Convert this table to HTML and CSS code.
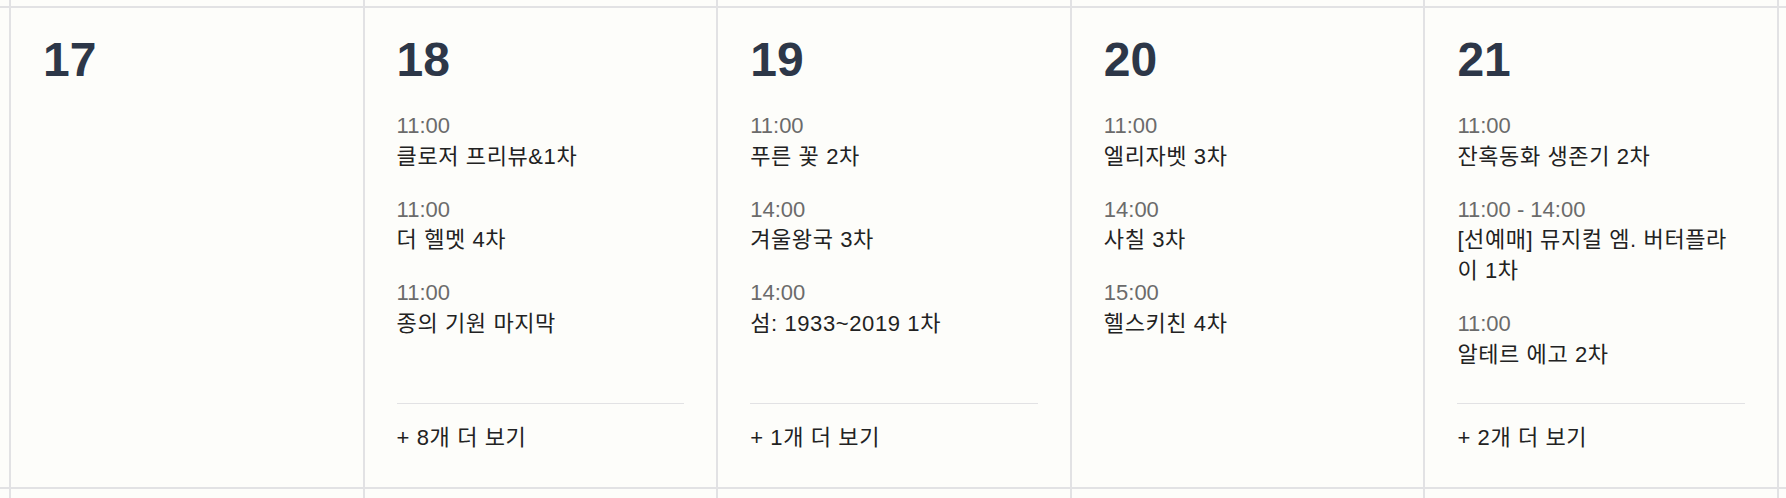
FILE: index.html
```html
<!DOCTYPE html>
<html lang="ko">
<head>
<meta charset="utf-8">
<title>Calendar week</title>
<link rel="stylesheet" href="styles.css">
</head>
<body>
<div class="calendar">
  <div class="cell"></div><div class="cell"></div><div class="cell"></div><div class="cell"></div><div class="cell"></div><div class="cell"></div><div class="cell"></div>

  <div class="cell"></div>
  <div class="cell day">
    <div class="date">17</div>
  </div>
  <div class="cell day">
    <div class="date">18</div>
    <ul class="events">
      <li class="event"><div class="time">11:00</div><div class="title">클로저 프리뷰&amp;1차</div></li>
      <li class="event"><div class="time">11:00</div><div class="title">더 헬멧 4차</div></li>
      <li class="event"><div class="time">11:00</div><div class="title">종의 기원 마지막</div></li>
    </ul>
    <div class="more">+ 8개 더 보기</div>
  </div>
  <div class="cell day">
    <div class="date">19</div>
    <ul class="events">
      <li class="event"><div class="time">11:00</div><div class="title">푸른 꽃 2차</div></li>
      <li class="event"><div class="time">14:00</div><div class="title">겨울왕국 3차</div></li>
      <li class="event"><div class="time">14:00</div><div class="title">섬: 1933~2019 1차</div></li>
    </ul>
    <div class="more">+ 1개 더 보기</div>
  </div>
  <div class="cell day">
    <div class="date">20</div>
    <ul class="events">
      <li class="event"><div class="time">11:00</div><div class="title">엘리자벳 3차</div></li>
      <li class="event"><div class="time">14:00</div><div class="title">사칠 3차</div></li>
      <li class="event"><div class="time">15:00</div><div class="title">헬스키친 4차</div></li>
    </ul>
  </div>
  <div class="cell day">
    <div class="date">21</div>
    <ul class="events">
      <li class="event"><div class="time">11:00</div><div class="title">잔혹동화 생존기 2차</div></li>
      <li class="event"><div class="time">11:00 - 14:00</div><div class="title">[선예매] 뮤지컬 엠. 버터플라이 1차</div></li>
      <li class="event"><div class="time">11:00</div><div class="title">알테르 에고 2차</div></li>
    </ul>
    <div class="more">+ 2개 더 보기</div>
  </div>
  <div class="cell"></div>

  <div class="cell"></div><div class="cell"></div><div class="cell"></div><div class="cell"></div><div class="cell"></div><div class="cell"></div><div class="cell"></div>
</div>
</body>
</html>
```

FILE: styles.css
```css
html, body {
  margin: 0;
  padding: 0;
  height: 100%;
  overflow: hidden;
  background: #fdfdfa;
}

body {
  font-family: "Liberation Sans", "Noto Sans CJK KR", sans-serif;
  font-size: 22px;
  line-height: 30.75px;
  color: #222222;
}

.calendar {
  display: grid;
  grid-template-columns: 9px repeat(5, 1fr) 7px;
  grid-template-rows: 6px 479px 1fr;
  gap: 2px;
  height: 100vh;
  background: #e2e2e4;
}

.cell {
  background: #fdfdfa;
  min-width: 0;
}

.day {
  display: flex;
  flex-direction: column;
  padding: 28px 32px 33px;
}

.date {
  font-size: 48px;
  line-height: 48px;
  font-weight: 700;
  color: #2d3748;
  margin-bottom: 27px;
}

.events {
  list-style: none;
  margin: 0;
  padding: 0;
}

.event {
  margin-bottom: 22px;
}

.time {
  color: #6b6b6b;
}

.title {
  color: #222222;
  letter-spacing: 0.6px;
}

.more {
  margin-top: auto;
  border-top: 1px solid #e2e2e4;
  padding-top: 19px;
  color: #222222;
  letter-spacing: 0.6px;
}
```
